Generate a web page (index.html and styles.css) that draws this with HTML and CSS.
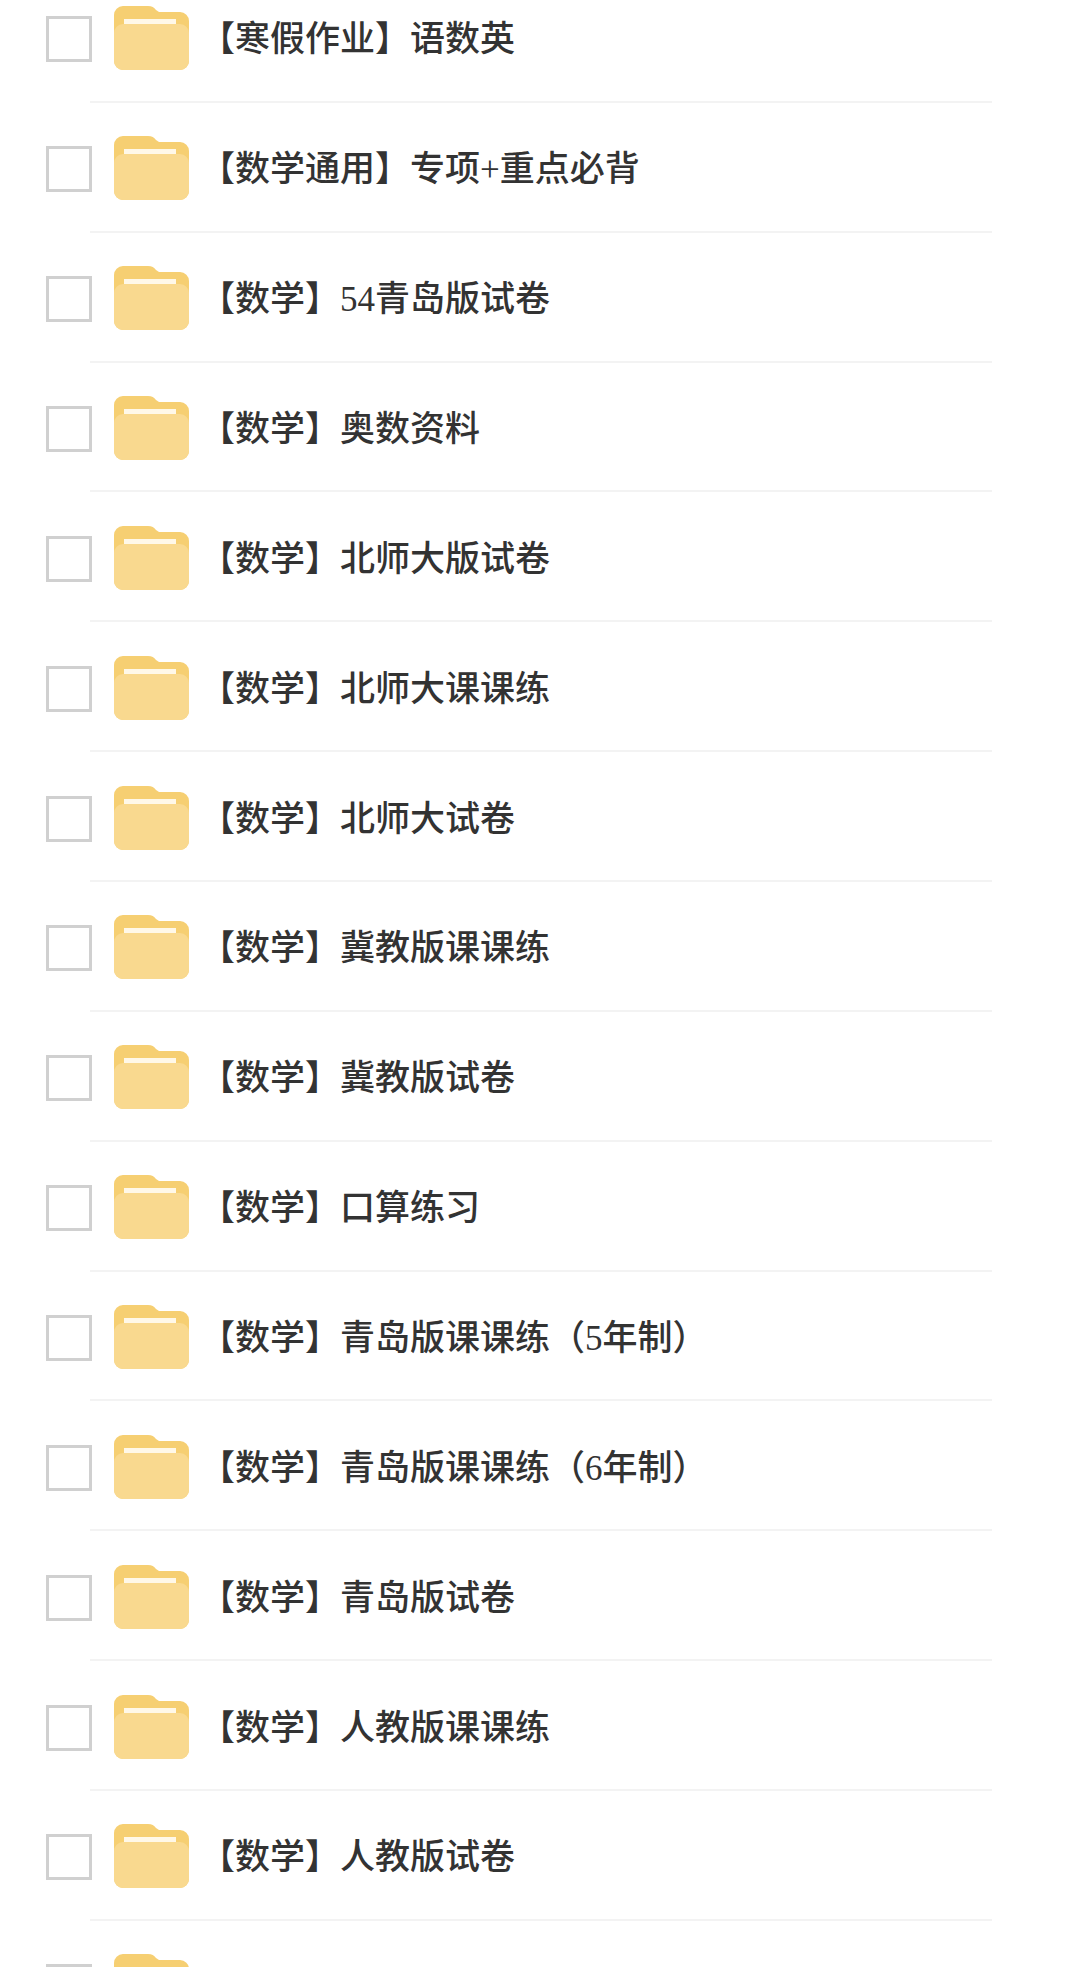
FILE: index.html
```html
<!DOCTYPE html>
<html lang="zh-CN">
<head>
    <meta charset="UTF-8">
    <meta name="viewport" content="width=device-width, initial-scale=1.0">
    <title>文件列表</title>
    <link rel="stylesheet" href="styles.css">
</head>
<body>
    <svg class="icon-defs" width="0" height="0" aria-hidden="true">
        <symbol id="folder" viewBox="0 0 75 64">
            <path d="M0 9a9 9 0 0 1 9-9h25c4 0 6 1.500 8 4l3 2h21a9 9 0 0 1 9 9v40a9 9 0 0 1-9 9H9a9 9 0 0 1-9-9z" fill="#f6cf72"/>
            <rect x="10" y="13" width="52" height="5.500" fill="#fff8e8"/>
            <path d="M0 27a9 9 0 0 1 9-9h57a9 9 0 0 1 9 9v28a9 9 0 0 1-9 9H9a9 9 0 0 1-9-9z" fill="#f9d98f"/>
        </symbol>
    </svg>

    <ul class="file-list">
        <li class="file-row"><div class="file-main"><span class="checkbox"></span><svg class="folder-icon"><use href="#folder"/></svg><span class="file-name">【寒假作业】语数英</span></div></li>
        <li class="file-row"><div class="file-main"><span class="checkbox"></span><svg class="folder-icon"><use href="#folder"/></svg><span class="file-name">【数学通用】专项+重点必背</span></div></li>
        <li class="file-row"><div class="file-main"><span class="checkbox"></span><svg class="folder-icon"><use href="#folder"/></svg><span class="file-name">【数学】54青岛版试卷</span></div></li>
        <li class="file-row"><div class="file-main"><span class="checkbox"></span><svg class="folder-icon"><use href="#folder"/></svg><span class="file-name">【数学】奥数资料</span></div></li>
        <li class="file-row"><div class="file-main"><span class="checkbox"></span><svg class="folder-icon"><use href="#folder"/></svg><span class="file-name">【数学】北师大版试卷</span></div></li>
        <li class="file-row"><div class="file-main"><span class="checkbox"></span><svg class="folder-icon"><use href="#folder"/></svg><span class="file-name">【数学】北师大课课练</span></div></li>
        <li class="file-row"><div class="file-main"><span class="checkbox"></span><svg class="folder-icon"><use href="#folder"/></svg><span class="file-name">【数学】北师大试卷</span></div></li>
        <li class="file-row"><div class="file-main"><span class="checkbox"></span><svg class="folder-icon"><use href="#folder"/></svg><span class="file-name">【数学】冀教版课课练</span></div></li>
        <li class="file-row"><div class="file-main"><span class="checkbox"></span><svg class="folder-icon"><use href="#folder"/></svg><span class="file-name">【数学】冀教版试卷</span></div></li>
        <li class="file-row"><div class="file-main"><span class="checkbox"></span><svg class="folder-icon"><use href="#folder"/></svg><span class="file-name">【数学】口算练习</span></div></li>
        <li class="file-row"><div class="file-main"><span class="checkbox"></span><svg class="folder-icon"><use href="#folder"/></svg><span class="file-name">【数学】青岛版课课练（5年制）</span></div></li>
        <li class="file-row"><div class="file-main"><span class="checkbox"></span><svg class="folder-icon"><use href="#folder"/></svg><span class="file-name">【数学】青岛版课课练（6年制）</span></div></li>
        <li class="file-row"><div class="file-main"><span class="checkbox"></span><svg class="folder-icon"><use href="#folder"/></svg><span class="file-name">【数学】青岛版试卷</span></div></li>
        <li class="file-row"><div class="file-main"><span class="checkbox"></span><svg class="folder-icon"><use href="#folder"/></svg><span class="file-name">【数学】人教版课课练</span></div></li>
        <li class="file-row"><div class="file-main"><span class="checkbox"></span><svg class="folder-icon"><use href="#folder"/></svg><span class="file-name">【数学】人教版试卷</span></div></li>
        <li class="file-row"><div class="file-main"><span class="checkbox"></span><svg class="folder-icon"><use href="#folder"/></svg><span class="file-name"></span></div></li>
    </ul>
</body>
</html>
```

FILE: styles.css
```css
* {
    margin: 0;
    padding: 0;
    box-sizing: border-box;
}

html, body {
    height: 1967px;
    overflow: hidden;
}

body {
    font-family: "Liberation Serif", "Noto Sans CJK SC", sans-serif;
    background-color: #fff;
    color: #333;
}

.icon-defs {
    display: block;
}

.file-list {
    list-style: none;
    margin-top: -27px;
}

.file-row {
    height: 129.86px;
    display: flex;
    flex-direction: column;
}

.file-row::after {
    content: '';
    display: block;
    height: 2px;
    margin: 0 88px 0 90px;
    background: #f3f3f3;
}

.file-main {
    flex: 1;
    display: flex;
    align-items: center;
    padding-left: 46px;
    padding-top: 3px;
}

.checkbox {
    width: 46px;
    height: 46px;
    margin-top: 2px;
    border: 3px solid #d0d0d0;
    background: #fff;
}

.folder-icon {
    width: 75px;
    height: 64px;
    margin-left: 22px;
}

.file-name {
    margin-left: 11px;
    margin-top: 4px;
    font-size: 35px;
    font-weight: 500;
    line-height: 48px;
    white-space: nowrap;
}
```
